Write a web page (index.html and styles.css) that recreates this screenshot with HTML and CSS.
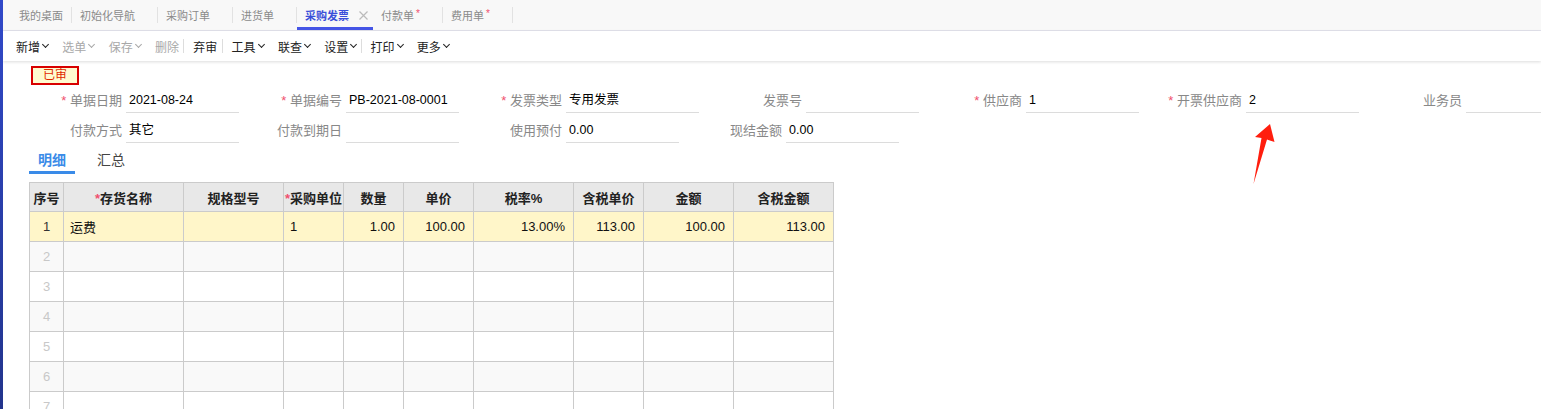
FILE: index.html
```html
<!DOCTYPE html>
<html lang="zh-CN">
<head>
  <meta charset="UTF-8" />
  <title>采购发票</title>
  <link rel="stylesheet" href="styles.css">
</head>
<body>
  <div class="app">
    <div class="stripe"></div>
    <div class="main">
      <div class="tabbar">
        <div class="tab first">我的桌面</div>
        <div class="tab">初始化导航</div>
        <div class="tab">采购订单</div>
        <div class="tab">进货单</div>
        <div class="tab active">采购发票
          <svg class="close" width="9" height="9" viewBox="0 0 9 9"><path d="M0.5 0.5 L8.5 8.5 M8.5 0.5 L0.5 8.5" stroke="#bbb" stroke-width="1.2"/></svg>
        </div>
        <div class="tab">付款单<span class="dirty">*</span></div>
        <div class="tab">费用单<span class="dirty">*</span></div>
      </div>

      <div class="toolbar">
        <span class="tool">新增<i class="chev"></i></span>
        <span class="tool off">选单<i class="chev"></i></span>
        <span class="tool off">保存<i class="chev"></i></span>
        <span class="tool off">删除</span>
        <span class="sep"></span>
        <span class="tool">弃审</span>
        <span class="sep"></span>
        <span class="tool">工具<i class="chev"></i></span>
        <span class="tool">联查<i class="chev"></i></span>
        <span class="tool">设置<i class="chev"></i></span>
        <span class="sep"></span>
        <span class="tool">打印<i class="chev"></i></span>
        <span class="tool">更多<i class="chev"></i></span>
      </div>

      <div class="content">
        <div class="badge">已审</div>

        <div class="form">
          <div class="form-row">
            <div class="field"><label><em>*</em> 单据日期</label><div class="input">2021-08-24</div></div>
            <div class="field"><label><em>*</em> 单据编号</label><div class="input">PB-2021-08-0001</div></div>
            <div class="field"><label><em>*</em> 发票类型</label><div class="input wide">专用发票</div></div>
            <div class="field"><label>发票号</label><div class="input"></div></div>
            <div class="field"><label><em>*</em> 供应商</label><div class="input">1</div></div>
            <div class="field"><label><em>*</em> 开票供应商</label><div class="input">2</div></div>
            <div class="field"><label>业务员</label><div class="input"></div></div>
          </div>
          <div class="form-row">
            <div class="field"><label>付款方式</label><div class="input">其它</div></div>
            <div class="field"><label>付款到期日</label><div class="input"></div></div>
            <div class="field"><label>使用预付</label><div class="input">0.00</div></div>
            <div class="field"><label>现结金额</label><div class="input">0.00</div></div>
          </div>
        </div>

        <div class="subtabs">
          <div class="subtab active">明细</div>
          <div class="subtab">汇总</div>
        </div>

        <table class="grid">
          <colgroup>
            <col style="width:34px"><col style="width:120px"><col style="width:100px"><col style="width:60px"><col style="width:60px">
            <col style="width:70px"><col style="width:100px"><col style="width:70px"><col style="width:90px"><col style="width:100px">
          </colgroup>
          <thead>
            <tr>
              <th>序号</th><th><em>*</em>存货名称</th><th>规格型号</th><th><em>*</em>采购单位</th><th>数量</th>
              <th>单价</th><th>税率%</th><th>含税单价</th><th>金额</th><th>含税金额</th>
            </tr>
          </thead>
          <tbody>
            <tr class="current">
              <td class="no">1</td><td>运费</td><td></td><td>1</td><td class="num">1.00</td>
              <td class="num">100.00</td><td class="num">13.00%</td><td class="num">113.00</td><td class="num">100.00</td><td class="num">113.00</td>
            </tr>
            <tr><td class="no">2</td><td></td><td></td><td></td><td></td><td></td><td></td><td></td><td></td><td></td></tr>
            <tr><td class="no">3</td><td></td><td></td><td></td><td></td><td></td><td></td><td></td><td></td><td></td></tr>
            <tr><td class="no">4</td><td></td><td></td><td></td><td></td><td></td><td></td><td></td><td></td><td></td></tr>
            <tr><td class="no">5</td><td></td><td></td><td></td><td></td><td></td><td></td><td></td><td></td><td></td></tr>
            <tr><td class="no">6</td><td></td><td></td><td></td><td></td><td></td><td></td><td></td><td></td><td></td></tr>
            <tr><td class="no">7</td><td></td><td></td><td></td><td></td><td></td><td></td><td></td><td></td><td></td></tr>
          </tbody>
        </table>
      </div>
    </div>
  </div>

  <!-- annotation arrow drawn over the page -->
  <svg class="arrow" width="30" height="70" viewBox="1250 120 30 70">
    <polygon points="1270,124 1274.5,142 1267,139.5 1253.5,184 1261.5,138 1255,137" fill="#ff1e0e"/>
  </svg>
</body>
</html>
```

FILE: styles.css
```css
html, body { margin: 0; padding: 0; height: 100%; overflow: hidden; }
body {
  font-family: "Liberation Sans", "Noto Sans CJK SC", sans-serif;
  font-size: 13px;
  color: #222;
  background: #fff;
}
em { font-style: normal; color: #f0506e; }

.app { display: flex; height: 100%; }
.stripe { width: 3px; flex-shrink: 0; background: linear-gradient(#3149c9, #22348c); }
.main { flex: 1; min-width: 0; overflow: hidden; }

/* top tab bar */
.tabbar {
  display: flex; align-items: center;
  height: 30px;
  background: #f8f8f8;
  border-bottom: 1px solid #e3e3ec;
  font-size: 11px;
  color: #8a8a8a;
}
.tab {
  position: relative;
  display: flex; align-items: center;
  height: 30px;
  padding: 0 23px 0 8px;
  box-sizing: border-box;
  white-space: nowrap;
}
.tab::after {
  content: ""; position: absolute; right: 0; top: 7px;
  width: 1px; height: 16px; background: #e2e2e2;
}
.tab.first { padding-left: 16px; padding-right: 9px; }
.tab.active {
  color: #3a4fd9; font-weight: bold;
  padding-right: 5px;
  border-bottom: 3px solid #4555e6;
  padding-top: 3px;
}
.tab.active::after { display: none; }
.tab .close { margin-left: 10px; }
.dirty { color: #f0506e; margin-left: 2px; font-size: 10px; align-self: flex-start; margin-top: 8px; }

/* toolbar */
.toolbar {
  display: flex; align-items: center;
  height: 30px;
  padding-left: 13px;
  background: #fff;
  box-shadow: 0 1px 3px rgba(0,0,0,0.14);
  font-size: 12px;
  color: #222;
  position: relative;
}
.tool { display: flex; align-items: center; margin-right: 14.3px; white-space: nowrap; }
.tool.off { color: #a8a8a8; }
.chev {
  display: inline-block; width: 4px; height: 4px;
  border-right: 1.6px solid currentColor; border-bottom: 1.6px solid currentColor;
  transform: rotate(45deg);
  margin: -3px 0 0 3px;
}
.sep { width: 1px; height: 14px; background: #ddd; margin: 0 9px 0 -10px; }

/* form area */
.content { padding-left: 26px; }
.badge {
  margin: 5px 0 0 2px;
  width: 48px; height: 19px; box-sizing: border-box;
  border: 2px solid #d80000;
  background: #fffbd0;
  color: #e02a00;
  font-size: 12px; line-height: 15px; text-align: center;
}
.form { margin: 4px 0 0 1px; }
.form-row { display: flex; height: 30px; white-space: nowrap; }
.field { display: flex; flex-shrink: 0; margin-right: 11px; }
.field label {
  width: 92px; padding-right: 4px;
  text-align: right;
  color: #888;
  line-height: 23px;
}
.input {
  width: 113px; height: 24px; box-sizing: border-box;
  padding-left: 3px;
  border-bottom: 1px solid #dcdcdc;
  line-height: 23px;
  color: #000;
  font-size: 12.5px;
}
.input.wide { width: 133px; }

/* detail tabs */
.subtabs { display: flex; height: 25px; }
.subtab {
  padding: 0 9px; margin-right: 13px;
  font-size: 14px; line-height: 22px;
  color: #444;
}
.subtab.active { color: #3a8be8; font-weight: bold; border-bottom: 3px solid #3a8be8; }

/* grid */
.grid {
  margin-top: 8px;
  border-collapse: collapse;
  table-layout: fixed;
  width: 805px;
}
.grid th, .grid td {
  border: 1px solid #cbcbcb;
  padding: 0 6px;
  white-space: nowrap; overflow: hidden;
}
.grid th {
  height: 28px;
  padding: 0;
  background: #e8e8e8;
  font-weight: bold;
  color: #222;
  text-align: center;
}
.grid td { height: 29px; color: #111; }
.grid tbody tr:nth-child(even) td { background: #f9f9f9; }
.grid tr.current td { background: #fff6c9; }
.grid td.no { text-align: center; color: #c8c8c8; padding: 0; }
.grid tr.current td.no { color: #333; }
.grid td.num { text-align: right; padding-right: 8px; }

.arrow { position: absolute; left: 1250px; top: 120px; }
```
